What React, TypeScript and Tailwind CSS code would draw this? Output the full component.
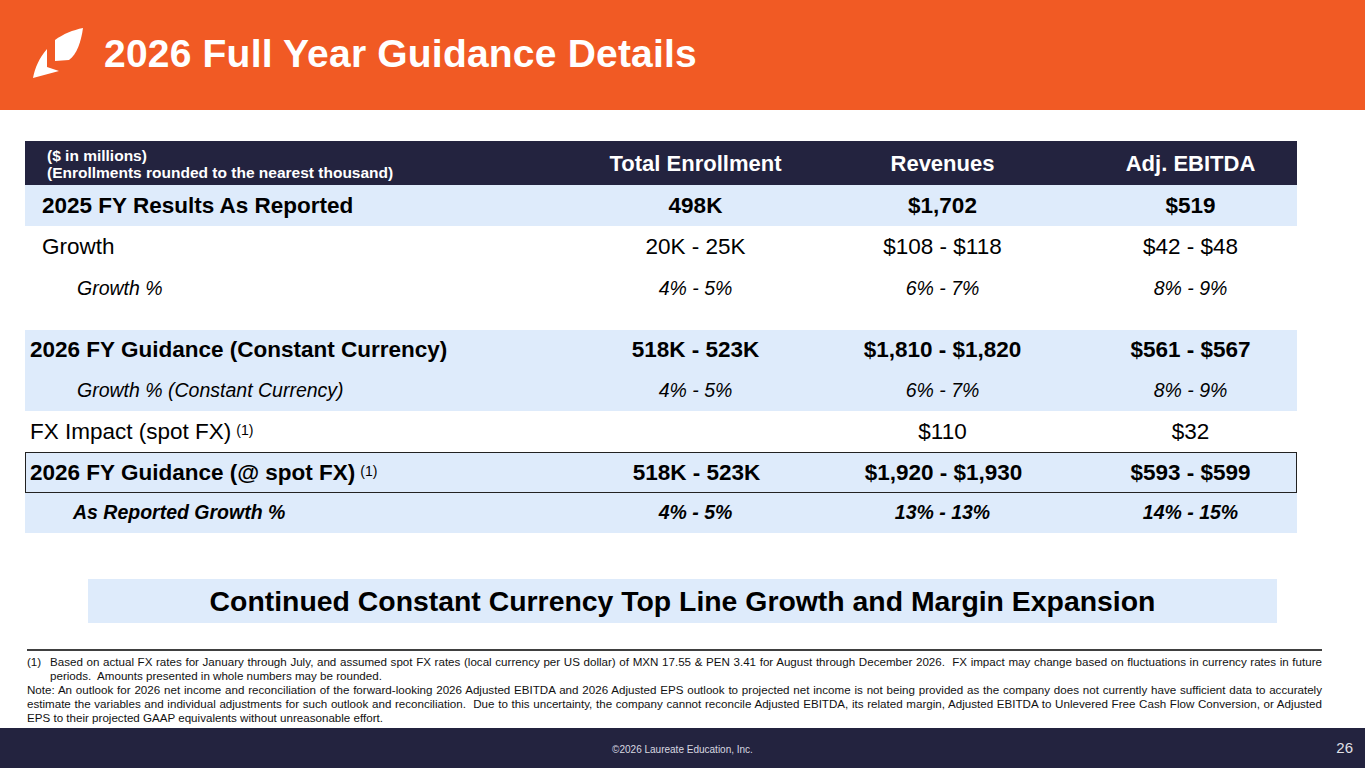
const rowBase = "grid grid-cols-[547px_247px_247px_1fr] items-center";

function Logo() {
  return (
    <svg width="52" height="52" viewBox="0 0 52 52" className="shrink-0">
      <path d="M22 12 C30 6 40 2 50 0 C48 14 44 26 36 32 L22 33 Z" fill="#fff" />
      <path d="M14 21 C6 30 2 40 0 50 L26 43 L14 39 Z" fill="#fff" />
    </svg>
  );
}

function Sup() {
  return <sup className="text-[14px] font-normal ml-[5px] relative -top-[4px]">(1)</sup>;
}

type Row = {
  label: React.ReactNode;
  vals: [string, string, string];
  bg: string;
  text: string;
  h: string;
  pl: string;
  extra?: string;
};

const rows: Row[] = [
  {
    label: "2025 FY Results As Reported",
    vals: ["498K", "$1,702", "$519"],
    bg: "bg-[#deebfb]",
    text: "font-bold text-[22.5px]",
    h: "h-[41px]",
    pl: "pl-[17px]",
  },
  {
    label: "Growth",
    vals: ["20K - 25K", "$108 - $118", "$42 - $48"],
    bg: "bg-white",
    text: "text-[22.5px]",
    h: "h-[41px]",
    pl: "pl-[17px]",
  },
  {
    label: "Growth %",
    vals: ["4% - 5%", "6% - 7%", "8% - 9%"],
    bg: "bg-white",
    text: "italic text-[19.5px]",
    h: "h-[43px]",
    pl: "pl-[52px]",
    extra: "mb-[20px]",
  },
  {
    label: "2026 FY Guidance (Constant Currency)",
    vals: ["518K - 523K", "$1,810 - $1,820", "$561 - $567"],
    bg: "bg-[#deebfb]",
    text: "font-bold text-[22.5px]",
    h: "h-[40px]",
    pl: "pl-[5px]",
  },
  {
    label: "Growth % (Constant Currency)",
    vals: ["4% - 5%", "6% - 7%", "8% - 9%"],
    bg: "bg-[#deebfb]",
    text: "italic text-[19.5px]",
    h: "h-[41px]",
    pl: "pl-[52px]",
  },
  {
    label: (
      <>
        FX Impact (spot FX)
        <Sup />
      </>
    ),
    vals: ["", "$110", "$32"],
    bg: "bg-white",
    text: "text-[22.5px]",
    h: "h-[41px]",
    pl: "pl-[5px]",
  },
  {
    label: (
      <>
        2026 FY Guidance (@ spot FX)
        <Sup />
      </>
    ),
    vals: ["518K - 523K", "$1,920 - $1,930", "$593 - $599"],
    bg: "bg-[#deebfb] border-[1.5px] border-[#222]",
    text: "font-bold text-[22.5px]",
    h: "h-[41px]",
    pl: "pl-[4px]",
  },
  {
    label: "As Reported Growth %",
    vals: ["4% - 5%", "13% - 13%", "14% - 15%"],
    bg: "bg-[#deebfb]",
    text: "font-bold italic text-[19.5px]",
    h: "h-[40px]",
    pl: "pl-[48px]",
  },
];

export default function App() {
  return (
    <div
      className="w-[1365px] h-[768px] bg-white flex flex-col overflow-hidden text-black"
      style={{ fontFamily: '"Liberation Sans", Arial, sans-serif' }}
    >
      <header className="h-[110px] bg-[#f15a24] flex items-center pl-[33px] gap-[19px] pb-[3px]">
        <Logo />
        <h1 className="text-white font-bold text-[39px] leading-none tracking-[0.2px]">
          2026 Full Year Guidance Details
        </h1>
      </header>

      <main className="flex-1 flex flex-col pt-[31px]">
        <div className="mx-[25px] w-[1272px]">
          <div className={`${rowBase} h-[44px] bg-[#23233f] text-white font-bold`}>
            <div className="pl-[22px] text-[15.5px] leading-[17px] pt-[2px] whitespace-nowrap">
              <div>($ in millions)</div>
              <div>(Enrollments rounded to the nearest thousand)</div>
            </div>
            <div className="text-center text-[22px]">Total Enrollment</div>
            <div className="text-center text-[22px]">Revenues</div>
            <div className="text-center text-[22px] pl-[18px]">Adj. EBITDA</div>
          </div>
          {rows.map((r, i) => (
            <div key={i} className={`${rowBase} ${r.bg} ${r.h} ${r.text} ${r.extra ?? ""}`}>
              <div className={`${r.pl} whitespace-nowrap`}>{r.label}</div>
              <div className="text-center">{r.vals[0]}</div>
              <div className="text-center">{r.vals[1]}</div>
              <div className="text-center pl-[18px]">{r.vals[2]}</div>
            </div>
          ))}
        </div>

        <div className="mt-[46px] mx-[88px] w-[1189px] h-[44px] bg-[#deebfb] flex items-center justify-center">
          <span className="font-bold text-[28.4px]">
            Continued Constant Currency Top Line Growth and Margin Expansion
          </span>
        </div>

        <div className="mt-[26px] mx-[27px] w-[1295px] border-t-2 border-[#404040] pt-[4px] text-[11.6px] leading-[14px] text-[#111] text-justify">
          <div className="flex">
            <span className="w-[23px] shrink-0">(1)</span>
            <span>
              Based on actual FX rates for January through July, and assumed spot FX rates (local currency per US dollar) of MXN 17.55 &amp; PEN 3.41 for August through December 2026.&nbsp; FX impact may change based on fluctuations in currency rates in future periods.&nbsp; Amounts presented in whole numbers may be rounded.
            </span>
          </div>
          <p>
            Note: An outlook for 2026 net income and reconciliation of the forward-looking 2026 Adjusted EBITDA and 2026 Adjusted EPS outlook to projected net income is not being provided as the company does not currently have sufficient data to accurately estimate the variables and individual adjustments for such outlook and reconciliation.&nbsp; Due to this uncertainty, the company cannot reconcile Adjusted EBITDA, its related margin, Adjusted EBITDA to Unlevered Free Cash Flow Conversion, or Adjusted EPS to their projected GAAP equivalents without unreasonable effort.
          </p>
        </div>
      </main>

      <footer className="h-[40px] bg-[#23233f] relative flex items-center justify-center">
        <span className="text-[10px] text-[#d8d8e0] pt-[2px]">©2026 Laureate Education, Inc.</span>
        <span className="absolute right-[12px] text-[15px] text-[#e0e0e8]">26</span>
      </footer>
    </div>
  );
}
